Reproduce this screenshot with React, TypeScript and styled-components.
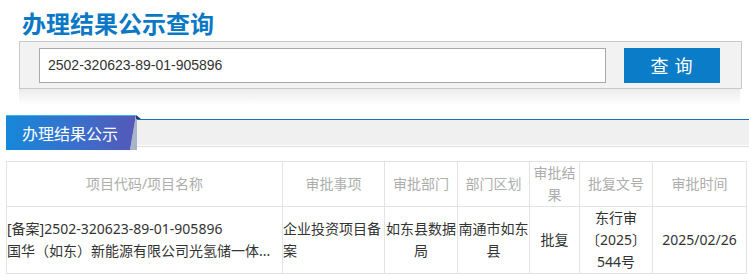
import React from 'react'
import styled, { createGlobalStyle } from 'styled-components'

const GlobalStyle = createGlobalStyle`
  body {
    margin: 0;
    background: #ffffff;
    font-family: 'Noto Sans', 'Noto Sans CJK SC', sans-serif;
  }
`

const Page = styled.div`
  width: 749px;
  height: 280px;
  overflow: hidden;
`

const Title = styled.h1`
  margin: 11px 0 0 22px;
  font-family: 'Noto Sans CJK SC', sans-serif;
  font-size: 24px;
  line-height: 24px;
  font-weight: 700;
  color: #0b78c5;
`

const SearchBox = styled.div`
  margin: 6px 0 0 19px;
  width: 683px;
  height: 46px;
  display: flex;
  align-items: center;
  gap: 18px;
  padding: 0 19px;
  background: #f2f2f2;
  border: 1px solid #c9c9c9;
`

const SearchInput = styled.input`
  width: 567px;
  height: 35px;
  box-sizing: border-box;
  border: 1px solid #a9a9a9;
  background: #ffffff;
  padding: 0 8px;
  font-family: 'Liberation Sans', Arial, sans-serif;
  font-size: 14px;
  color: #333333;
  outline: none;
`

const SearchButton = styled.button`
  width: 96px;
  height: 35px;
  border: none;
  background: #0b7cc8;
  color: #ffffff;
  font-family: 'Noto Sans CJK SC', sans-serif;
  font-size: 18px;
  letter-spacing: 1px;
  padding: 0;
  cursor: pointer;
`

const SearchShadow = styled.div`
  margin-left: 19px;
  width: 721px;
  height: 16px;
  background: linear-gradient(#ebebeb, #ffffff);
`

const TabRow = styled.div`
  margin: 10px 0 0 6px;
  display: flex;
  align-items: flex-start;
  height: 35px;
`

const TabWrap = styled.div`
  position: relative;
  width: 131px;
  height: 35px;
  flex: none;

  &::before {
    content: '';
    position: absolute;
    left: 124px;
    top: 4px;
    width: 7px;
    height: 31px;
    background: #a7b5c8;
    clip-path: polygon(5.3px 0, 7px 0, 7px 100%, 0 100%);
  }

  &::after {
    content: '';
    position: absolute;
    left: 130px;
    top: 0;
    width: 5px;
    height: 4px;
    background: #1d3f6e;
    clip-path: polygon(0 0, 100% 100%, 0 100%);
  }
`

const Tab = styled.div`
  height: 35px;
  width: 131px;
  box-sizing: border-box;
  padding-left: 16px;
  display: flex;
  align-items: center;
  background: linear-gradient(90deg, #1688d9 0%, #3a6fcb 55%, #5657b8 100%);
  border-top: 1px solid #36b6ee;
  clip-path: polygon(0 0, 130px 0, 124px 100%, 0 100%);
  color: #ffffff;
  font-family: 'Noto Sans CJK SC', sans-serif;
  font-size: 16px;
`

const TabBar = styled.div`
  flex: 1;
  margin-top: 4px;
  height: 25px;
  border-top: 1px solid #1b6fb6;
  background: #f0f0f0;
  box-shadow: 0 1px 0 #ffffff, 0 2px 0 #dedede;
`

const Table = styled.table`
  margin: 11px 0 0 6px;
  width: 740px;
  table-layout: fixed;
  border-collapse: collapse;
  font-size: 14px;
  line-height: 22px;
`

const Th = styled.th`
  height: 44px;
  padding: 0;
  border: 1px solid #e3e3e3;
  font-weight: 400;
  color: #adadad;
  text-align: center;
  vertical-align: middle;
`

const Td = styled.td<{ $left?: boolean }>`
  height: 66px;
  padding: 0;
  border: 1px solid #e3e3e3;
  color: #333333;
  text-align: ${props => (props.$left ? 'left' : 'center')};
  vertical-align: middle;
`

const Line = styled.div`
  white-space: nowrap;
  overflow: hidden;
`

const columns = [
  { title: '项目代码/项目名称', width: 276 },
  { title: '审批事项', width: 102 },
  { title: '审批部门', width: 73 },
  { title: '部门区划', width: 72 },
  { title: '审批结果', width: 50 },
  { title: '批复文号', width: 73 },
  { title: '审批时间', width: 94 },
]

const App = () => {
  return (
    <Page>
      <GlobalStyle />
      <Title>办理结果公示查询</Title>
      <SearchBox>
        <SearchInput defaultValue="2502-320623-89-01-905896" />
        <SearchButton>查 询</SearchButton>
      </SearchBox>
      <SearchShadow />
      <TabRow>
        <TabWrap>
          <Tab>办理结果公示</Tab>
        </TabWrap>
        <TabBar />
      </TabRow>
      <Table>
        <colgroup>
          {columns.map(col => (
            <col key={col.title} style={{ width: col.width }} />
          ))}
        </colgroup>
        <thead>
          <tr>
            {columns.map(col => (
              <Th key={col.title}>{col.title}</Th>
            ))}
          </tr>
        </thead>
        <tbody>
          <tr>
            <Td $left>
              <Line>[备案]2502-320623-89-01-905896</Line>
              <Line>国华（如东）新能源有限公司光氢储一体...</Line>
            </Td>
            <Td $left>企业投资项目备案</Td>
            <Td>如东县数据局</Td>
            <Td>南通市如东县</Td>
            <Td>批复</Td>
            <Td>东行审〔2025〕544号</Td>
            <Td>2025/02/26</Td>
          </tr>
        </tbody>
      </Table>
    </Page>
  )
}

export default App
